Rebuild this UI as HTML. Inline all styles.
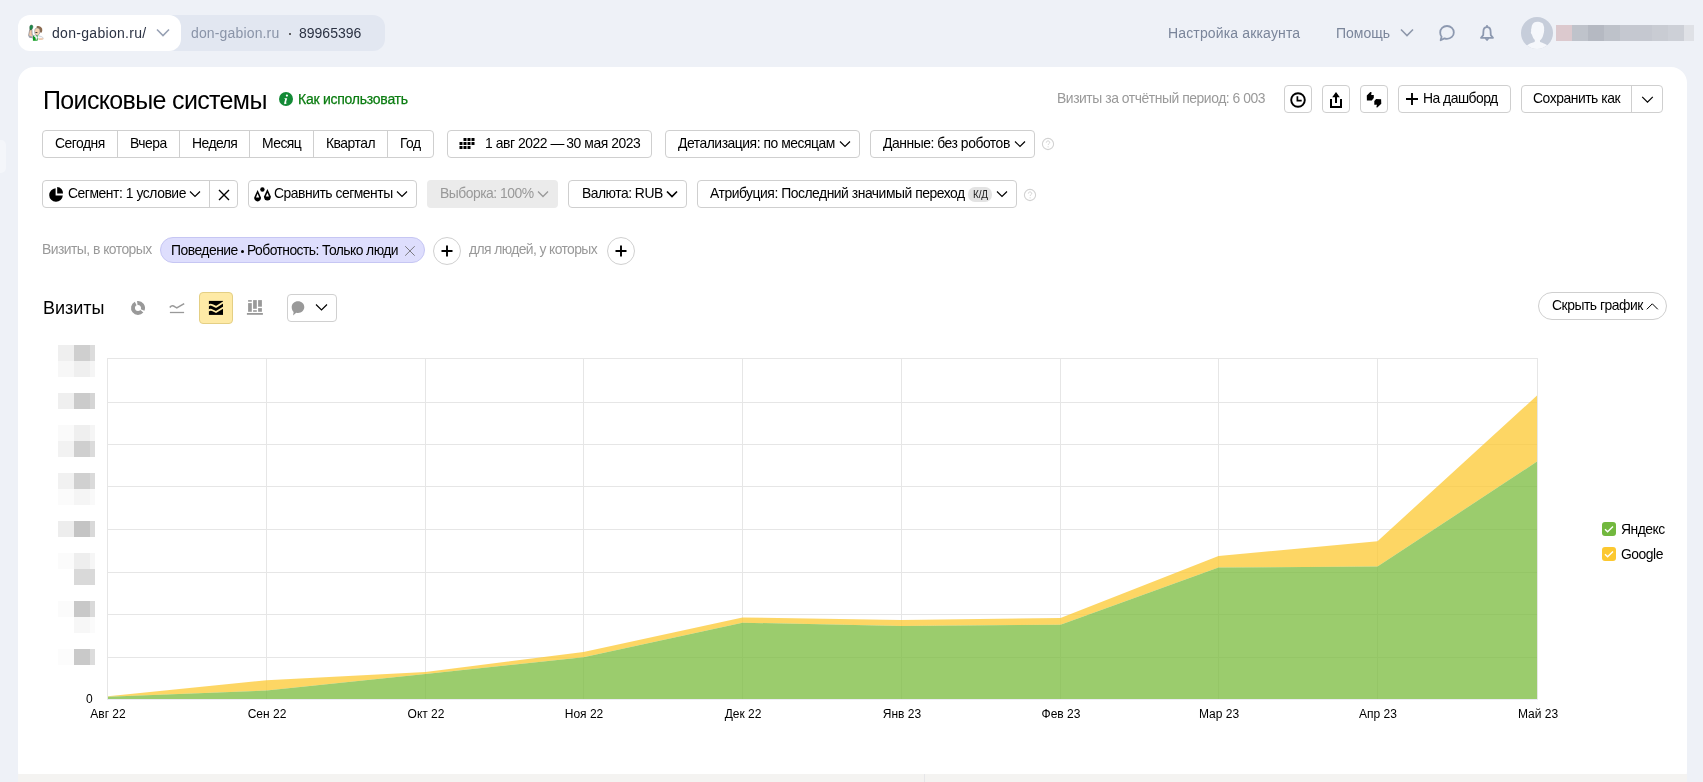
<!DOCTYPE html>
<html><head><meta charset="utf-8">
<style>
*{box-sizing:border-box;margin:0;padding:0}
html,body{width:1703px;height:782px;overflow:hidden;background:#eef1f7;font-family:"Liberation Sans",sans-serif;color:#000}
.a{position:absolute}
.t{position:absolute;white-space:nowrap;line-height:1;will-change:transform}
.btn{position:absolute;border:1px solid #cfcfcf;border-radius:4px;background:#fff;height:28px}
.chev{position:absolute}
</style></head><body>
<!-- TOP BAR -->
<div class="a" style="left:160px;top:15px;width:225px;height:36px;border-radius:12px;background:#e2e7f1"></div>
<div class="a" style="left:18px;top:15px;width:163px;height:36px;border-radius:12px;background:#fff"></div>
<svg class="a" style="left:26px;top:23px" width="20" height="20" viewBox="0 0 20 20">
<path d="M2.6 12.2l1.1-5.4 2.2-.5.3 5.6 2 .8-1 2.2-3.4-.6z" fill="#f2c9a8" stroke="#6b6f7a" stroke-width=".6"/>
<path d="M2.4 12.3l3.6 1.2 1.5-.2-.3 1.7-4.2-.5z" fill="#9aa0ad"/>
<path d="M4.2 2.6c.8-.9 2.3-.6 2.6.4.3 1.2-.2 2.7-1.2 3.6l-1.6.3C3.6 5.5 3.6 3.4 4.2 2.6z" fill="#1a8a4a" stroke="#2f5a3c" stroke-width=".5"/>
<path d="M10.6 3.4c2.2-.8 4.6.2 5.4 2.2.6 1.6.2 3.2-.5 4.2l-2.4-.8-2.5-2.9z" fill="#8b6a4f"/>
<path d="M9.4 5.6c1.4-1 3.4-.6 4.2.8.7 1.4.4 3.3-.3 4.6-.6 1.1-1.6 1.6-2.6 1.4-1.2-.3-1.8-1.4-2-2.5-.2-1.4 0-3.4.7-4.3z" fill="#f4d2b2" stroke="#7a7f8c" stroke-width=".5"/>
<path d="M9.4 9.2c.8-.3 1.6-.3 2.4.1-.6.7-1.5.9-2.3.6z" fill="#333"/>
<path d="M6.5 12.6l3 .2 2.4-.3 3.8 1.2 1.6 1.2-1 1.4-3.8-.3H7z" fill="#f6f7fa" stroke="#a0a6b2" stroke-width=".5"/>
<path d="M7 12.4l2.4 2 .6 3.4H6.9zM9.6 12.4l2.2.2-.5 2.8-1.4 2.4h1.6l.4-3.6z" fill="#0c9a1c"/>
<path d="M12 15.6l4-.4 1.6.3-.5 1-3.6.5z" fill="#f0c7a6"/>
</svg>
<div class="t" style="left:52px;top:26px;font-size:14px;color:#2b3243;letter-spacing:.3px">don-gabion.ru/</div>
<svg class="a" style="left:156px;top:28px" width="14" height="10" viewBox="0 0 14 10"><path d="M1 1.5l6 6 6-6" fill="none" stroke="#97a1b4" stroke-width="1.6"/></svg>
<div class="t" style="left:190.5px;top:26px;font-size:14px;color:#8a94a8;letter-spacing:.15px">don-gabion.ru</div>
<div class="a" style="left:288.8px;top:32.7px;width:2.6px;height:2.6px;border-radius:2px;background:#333"></div>
<div class="t" style="left:299px;top:26px;font-size:14px;color:#2b3243">89965396</div>

<div class="t" style="left:1168px;top:26px;font-size:14px;color:#7a859a;letter-spacing:.15px">Настройка аккаунта</div>
<div class="t" style="left:1336px;top:26px;font-size:14px;color:#7a859a">Помощь</div>
<svg class="a" style="left:1400px;top:28px" width="14" height="10" viewBox="0 0 14 10"><path d="M1 1.5l6 6 6-6" fill="none" stroke="#8e98ab" stroke-width="1.6"/></svg>
<svg class="a" style="left:1438px;top:24px" width="18" height="18" viewBox="0 0 18 18"><path d="M9 2c3.9 0 6.8 2.8 6.8 6.4S12.9 14.8 9 14.8c-.9 0-1.8-.15-2.6-.45L2.6 16.2l1-3.4C2.7 11.6 2.2 10.1 2.2 8.4 2.2 4.8 5.1 2 9 2z" fill="none" stroke="#8d99b0" stroke-width="1.8" stroke-linejoin="round"/></svg>
<svg class="a" style="left:1478px;top:24px" width="18" height="18" viewBox="0 0 18 18"><path d="M9 3.2c-2.2 0-3.6 1.7-3.6 4.4l-.2 3.6-2.2 2.6h12l-2.2-2.6-.2-3.6C12.6 4.9 11.2 3.2 9 3.2z" fill="none" stroke="#8d99b0" stroke-width="1.8" stroke-linejoin="round"/><path d="M7.2 14l1.8 2 1.8-2" fill="none" stroke="#8d99b0" stroke-width="1.7" stroke-linejoin="round"/><rect x="8.1" y="1.1" width="1.8" height="2.4" rx=".6" fill="#8d99b0"/></svg>
<div class="a" style="left:1521px;top:17px;width:32px;height:32px;border-radius:16px;background:#c6cdda;overflow:hidden"><svg width="32" height="32" viewBox="0 0 32 32"><path d="M11 8.2c1-2.6 3.4-3.6 6.2-3.4 2.2.2 3.6.9 4.8 2 .5 1 .4 2 1 3 .4 1.3-.2 2.4.2 3.4-.1 1.6-.4 3.2-.9 4.6-.7 2.7-1.8 4.6-3.4 5.6l.2 1.6c3 .8 6 2.3 8.4 4.2L26 32H6l-1-3.1c2.6-1.8 5.2-3 8.6-3.9l.3-2c-1.4-1.2-2.4-3-2.9-5.2-.6-.4-1-1.3-1.2-2.2.4-1 .5-1.6.2-2.8.6-1.4.4-2.8 1-4.6z" fill="#f5f7fb"/></svg></div>
<div class="a" style="left:1556px;top:25px;height:16px;width:138px;display:flex">
<div style="width:16px;background:#dcc9ce"></div><div style="width:16px;background:#bfc3cb"></div><div style="width:16px;background:#b5b9c2"></div><div style="width:16px;background:#bec2ca"></div><div style="width:16px;background:#c5c8d0"></div><div style="width:16px;background:#c5c8d0"></div><div style="width:16px;background:#c9ccd3"></div><div style="width:16px;background:#cdd0d7"></div><div style="width:10px;background:#dfe1e6"></div>
</div>

<div class="a" style="left:-10px;top:140px;width:16px;height:33px;border-radius:5px;background:#f4f6fa"></div>
<!-- CARD -->
<div class="a" style="left:18px;top:67px;width:1669px;height:720px;border-radius:16px;background:#fff"></div>
<div class="a" style="left:18px;top:774px;width:1669px;height:8px;background:#f4f3f1"></div>
<div class="a" style="left:924px;top:774px;width:1px;height:8px;background:#e6e6e9"></div>

<!-- HEADER ROW -->
<div class="t" style="left:43px;top:87.5px;font-size:25px;color:#000;letter-spacing:-.65px">Поисковые системы</div>
<div class="a" style="left:279px;top:92px;width:14px;height:14px;border-radius:7px;background:#138a36"></div>
<svg class="a" style="left:279px;top:92px" width="14" height="14" viewBox="0 0 14 14"><circle cx="7.9" cy="3.6" r="1.1" fill="#fff"/><path d="M5.6 6.2h2.6l-1.2 4.4c-.1.4.2.5.6.2l.4-.3.2.3c-.8.9-1.6 1.4-2.3 1.4-.6 0-.9-.4-.7-1.1l.9-3.6c.1-.4-.3-.5-.7-.3z" fill="#fff"/></svg>
<div class="t" style="left:298px;top:91.5px;font-size:14px;color:#0a7c10;letter-spacing:-.25px;-webkit-text-stroke:.25px #0a7c10">Как использовать</div>

<div class="t" style="left:1057px;top:92.23px;font-size:13.9px;letter-spacing:-0.446px;color:#999">Визиты за отчётный период: 6 003</div>
<div class="btn" style="left:1284px;top:85px;width:28px"></div>
<svg class="a" style="left:1284px;top:85px" width="28" height="28" viewBox="0 0 28 28"><circle cx="14" cy="15" r="6.8" fill="none" stroke="#000" stroke-width="1.9"/><path d="M13.4 11.2v4.5h4.3" fill="none" stroke="#000" stroke-width="1.7"/></svg>
<div class="btn" style="left:1322px;top:85px;width:28px"></div>
<svg class="a" style="left:1322px;top:85px" width="28" height="28" viewBox="0 0 28 28"><path d="M14 7l3.8 5.2h-2.8V18h-2V12.2h-2.8z" fill="#000"/><path d="M9 14v8h10v-8" fill="none" stroke="#000" stroke-width="2"/></svg>
<div class="btn" style="left:1360px;top:85px;width:28px"></div>
<svg class="a" style="left:1360px;top:85px" width="28" height="28" viewBox="0 0 28 28"><path d="M6.8 10.4L10.3 7l1.3.3-.4 2.7h2.6v2.9l-2 2.5H6.9z" fill="#000"/><path d="M14.3 15.9l1.8-1.9 5 .2.2 4.5-4 3.9-1-.3.7-2.6h-2.7z" fill="#000"/></svg>
<div class="btn" style="left:1398px;top:85px;width:113px"></div>
<svg class="a" style="left:1405px;top:92px" width="14" height="14" viewBox="0 0 14 14"><path d="M7 1v12M1 7h12" stroke="#000" stroke-width="1.9"/></svg>
<div class="t" style="left:1423px;top:92.23px;font-size:13.9px;letter-spacing:-0.512px">На дашборд</div>
<div class="btn" style="left:1521px;top:85px;width:142px"></div>
<div class="a" style="left:1631px;top:86px;width:1px;height:26px;background:#cfcfcf"></div>
<div class="t" style="left:1533px;top:92.23px;font-size:13.9px;letter-spacing:-0.459px">Сохранить как</div>
<svg class="a" style="left:1641px;top:95px" width="13" height="9" viewBox="0 0 13 9"><path d="M1.2 1.8l5.3 5.3 5.3-5.3" fill="none" stroke="#000" stroke-width="1.2"/></svg>

<!-- ROW 1 -->
<div class="btn" style="left:42px;top:130px;width:392px"></div>
<div class="a" style="left:117px;top:131px;width:1px;height:26px;background:#cfcfcf"></div>
<div class="a" style="left:179px;top:131px;width:1px;height:26px;background:#cfcfcf"></div>
<div class="a" style="left:249px;top:131px;width:1px;height:26px;background:#cfcfcf"></div>
<div class="a" style="left:313px;top:131px;width:1px;height:26px;background:#cfcfcf"></div>
<div class="a" style="left:387px;top:131px;width:1px;height:26px;background:#cfcfcf"></div>
<div class="t" style="left:55px;top:137.23px;font-size:13.9px;letter-spacing:-0.489px">Сегодня</div>
<div class="t" style="left:130px;top:137.23px;font-size:13.9px;letter-spacing:-0.503px">Вчера</div>
<div class="t" style="left:191.5px;top:137.23px;font-size:13.9px;letter-spacing:-0.518px">Неделя</div>
<div class="t" style="left:262px;top:137.23px;font-size:13.9px;letter-spacing:-0.537px">Месяц</div>
<div class="t" style="left:326px;top:137.23px;font-size:13.9px;letter-spacing:-0.480px">Квартал</div>
<div class="t" style="left:400px;top:137.23px;font-size:13.9px;letter-spacing:-0.474px">Год</div>

<div class="btn" style="left:447px;top:130px;width:205px"></div>
<svg class="a" style="left:459px;top:137px" width="17" height="13" viewBox="0 0 17 13"><g fill="#000"><rect x="4.5" y="1" width="3" height="3"/><rect x="8.5" y="1" width="3" height="3"/><rect x="12.5" y="1" width="3" height="3"/><rect x=".5" y="5" width="3" height="3"/><rect x="4.5" y="5" width="3" height="3"/><rect x="8.5" y="5" width="3" height="3"/><rect x="12.5" y="5" width="3" height="3"/><rect x=".5" y="9" width="3" height="3"/><rect x="4.5" y="9" width="3" height="3"/><rect x="8.5" y="9" width="3" height="3"/></g></svg>
<div class="t" style="left:484.5px;top:137.23px;font-size:13.9px;letter-spacing:-0.446px">1 авг 2022 —<span style="margin-left:-1px"> </span>30 мая 2023</div>

<div class="btn" style="left:665px;top:130px;width:195px"></div>
<div class="t" style="left:678px;top:137.23px;font-size:13.9px;letter-spacing:-0.467px">Детализация: по месяцам</div>
<svg class="a" style="left:839px;top:140px" width="12" height="8" viewBox="0 0 12 8"><path d="M1 1.5l5 5 5-5" fill="none" stroke="#000" stroke-width="1.15"/></svg>

<div class="btn" style="left:870px;top:130px;width:165px"></div>
<div class="t" style="left:882.5px;top:137.23px;font-size:13.9px;letter-spacing:-0.457px">Данные: без роботов</div>
<svg class="a" style="left:1013.5px;top:140px" width="12" height="8" viewBox="0 0 12 8"><path d="M1 1.5l5 5 5-5" fill="none" stroke="#000" stroke-width="1.15"/></svg>
<svg class="a" style="left:1041px;top:137px" width="14" height="14" viewBox="0 0 14 14"><circle cx="7" cy="7" r="5.6" fill="none" stroke="#d2d2d2" stroke-width="1.1"/><path d="M5.3 5.6c0-1 .8-1.7 1.7-1.7s1.7.7 1.7 1.6c0 1.2-1.5 1.2-1.5 2.4" fill="none" stroke="#d2d2d2" stroke-width="1"/><circle cx="7.1" cy="9.8" r=".6" fill="#d2d2d2"/></svg>

<!-- ROW 2 -->
<div class="btn" style="left:42px;top:180px;width:196px"></div>
<div class="a" style="left:209px;top:181px;width:1px;height:26px;background:#cfcfcf"></div>
<svg class="a" style="left:48px;top:186px" width="16" height="16" viewBox="0 0 16 16"><path d="M7.6 2.2A6.8 6.8 0 1 0 14.8 9.4H7.6z" fill="#000"/><path d="M9.2 1A6.2 6.2 0 0 1 15 7.6H9.2z" fill="#000"/></svg>
<div class="t" style="left:67.5px;top:187.23px;font-size:13.9px;letter-spacing:-0.449px">Сегмент: 1 условие</div>
<svg class="a" style="left:188.5px;top:190px" width="12" height="8" viewBox="0 0 12 8"><path d="M1 1.5l5 5 5-5" fill="none" stroke="#000" stroke-width="1.15"/></svg>
<svg class="a" style="left:218px;top:189px" width="12" height="12" viewBox="0 0 12 12"><path d="M1 1l10 10M11 1L1 11" stroke="#000" stroke-width="1.4"/></svg>

<div class="btn" style="left:248px;top:180px;width:169px"></div>
<svg class="a" style="left:253px;top:186px" width="19" height="17" viewBox="0 0 19 17"><path d="M4.6 3.9L1.3 11.2A3.4 3.4 0 1 0 7.9 11.2z" fill="#000"/><path d="M4.6 7.6L3 11.4h3.2z" fill="#fff"/><path d="M14.4 3L11.1 10.3A3.4 3.4 0 1 0 17.7 10.3z" fill="#000"/><path d="M14.4 6.7l-1.6 3.8H16z" fill="#fff"/><circle cx="9.4" cy="3.5" r="2.2" fill="#000"/></svg>
<div class="t" style="left:274px;top:187.23px;font-size:13.9px;letter-spacing:-0.478px">Сравнить сегменты</div>
<svg class="a" style="left:395.5px;top:190px" width="12" height="8" viewBox="0 0 12 8"><path d="M1 1.5l5 5 5-5" fill="none" stroke="#000" stroke-width="1.15"/></svg>

<div class="a" style="left:427px;top:180px;width:131px;height:28px;border-radius:4px;background:#ebebeb"></div>
<div class="t" style="left:439.5px;top:187.23px;font-size:13.9px;letter-spacing:-0.493px;color:#999">Выборка: 100%</div>
<svg class="a" style="left:536.5px;top:190px" width="12" height="8" viewBox="0 0 12 8"><path d="M1 1.5l5 5 5-5" fill="none" stroke="#999" stroke-width="1.3"/></svg>

<div class="btn" style="left:568px;top:180px;width:119px"></div>
<div class="t" style="left:581.5px;top:187.23px;font-size:13.9px;letter-spacing:-0.501px">Валюта: RUB</div>
<svg class="a" style="left:665.5px;top:190px" width="12" height="8" viewBox="0 0 12 8"><path d="M1 1.5l5 5 5-5" fill="none" stroke="#000" stroke-width="1.7"/></svg>

<div class="btn" style="left:697px;top:180px;width:320px"></div>
<div class="t" style="left:710px;top:187.23px;font-size:13.9px;letter-spacing:-0.471px">Атрибуция: Последний значимый переход</div>
<div class="a" style="left:967.5px;top:187px;width:24.5px;height:14.5px;border-radius:7px;background:#e3e3e3"></div>
<div class="t" style="left:973px;top:189.5px;font-size:10px;color:#222;letter-spacing:-.2px">К/Д</div>
<svg class="a" style="left:996px;top:190px" width="12" height="8" viewBox="0 0 12 8"><path d="M1 1.5l5 5 5-5" fill="none" stroke="#000" stroke-width="1.15"/></svg>
<svg class="a" style="left:1023px;top:188px" width="14" height="14" viewBox="0 0 14 14"><circle cx="7" cy="7" r="5.6" fill="none" stroke="#d2d2d2" stroke-width="1.1"/><path d="M5.3 5.6c0-1 .8-1.7 1.7-1.7s1.7.7 1.7 1.6c0 1.2-1.5 1.2-1.5 2.4" fill="none" stroke="#d2d2d2" stroke-width="1"/><circle cx="7.1" cy="9.8" r=".6" fill="#d2d2d2"/></svg>

<!-- ROW 3 -->
<div class="t" style="left:41.7px;top:243.23px;font-size:13.9px;letter-spacing:-0.53px;color:#999;">Визиты, в которых</div>
<div class="a" style="left:160px;top:237px;width:265px;height:26px;border-radius:13px;background:#dedefd;border:1px solid #c6c6f3"></div>
<div class="t" style="left:170.5px;top:243.83px;font-size:13.9px;letter-spacing:-0.509px">Поведение</div><div class="a" style="left:240.7px;top:249.7px;width:3.2px;height:3.2px;border-radius:2px;background:#000"></div><div class="t" style="left:246.8px;top:243.83px;font-size:13.9px;letter-spacing:-0.56px;">Роботность: Только люди</div>
<svg class="a" style="left:404px;top:245px" width="12" height="12" viewBox="0 0 12 12"><path d="M1.2 1.2l9.5 9.5M10.7 1.2L1.2 10.7" stroke="#7a7a80" stroke-width="1"/></svg>
<div class="a" style="left:433px;top:237px;width:28px;height:28px;border-radius:14px;border:1px solid #d0d0d0"></div>
<svg class="a" style="left:441px;top:245px" width="12" height="12" viewBox="0 0 12 12"><path d="M6 .5v11M.5 6h11" stroke="#000" stroke-width="1.9"/></svg>
<div class="t" style="left:468.5px;top:243.23px;font-size:13.9px;letter-spacing:-0.609px;color:#999;">для людей, у которых</div>
<div class="a" style="left:607px;top:237px;width:28px;height:28px;border-radius:14px;border:1px solid #d0d0d0"></div>
<svg class="a" style="left:615px;top:245px" width="12" height="12" viewBox="0 0 12 12"><path d="M6 .5v11M.5 6h11" stroke="#000" stroke-width="1.9"/></svg>

<!-- CHART HEADER -->
<div class="t" style="left:43px;top:299px;font-size:18px">Визиты</div>
<svg class="a" style="left:127px;top:297px" width="22" height="22" viewBox="0 0 22 22"><path d="M10.30 6.00A5.05 5.05 0 0 1 15.61 13.05" fill="none" stroke="#999" stroke-width="3.9"/><path d="M14.87 14.25A5.05 5.05 0 1 1 8.71 6.50" fill="none" stroke="#999" stroke-width="3.9"/></svg>
<svg class="a" style="left:166px;top:297px" width="22" height="22" viewBox="0 0 22 22"><path d="M3.8 10.4Q6 7.6 8.6 9.6L10.8 10.9 18.2 6.6" fill="none" stroke="#999" stroke-width="1.6" stroke-linejoin="round"/><path d="M3.9 15.5h14.2" stroke="#999" stroke-width="1.3"/></svg>
<div class="a" style="left:199px;top:292px;width:34px;height:32px;border-radius:4px;background:#feeaa6;border:1px solid #e4cf84"></div>
<svg class="a" style="left:204px;top:297px" width="24" height="22" viewBox="0 0 24 22"><rect x="4.9" y="3.9" width="14.1" height="14" fill="#000"/><path d="M4.2 8.7Q6.3 6.9 8.4 8.1L12 9.9 19.8 5.1M4.2 13.8Q6.3 12 8.4 13.2L12 15 19.8 10.2" fill="none" stroke="#feeaa6" stroke-width="1.8" stroke-linejoin="round"/></svg>
<svg class="a" style="left:244px;top:297px" width="22" height="20" viewBox="0 0 22 20"><g fill="#999"><rect x="4.1" y="3.1" width="3.7" height="1.6"/><rect x="4.1" y="6.1" width="3.7" height="8.7"/><rect x="9.1" y="3.1" width="3.7" height="8.7"/><rect x="9.1" y="13.2" width="3.7" height="1.6"/><rect x="14.1" y="3.1" width="3.8" height="6.6"/><rect x="14.1" y="11.1" width="3.8" height="3.7"/><rect x="2.9" y="16" width="16" height="1.8"/></g></svg>
<div class="a" style="left:287px;top:294px;width:50px;height:28px;border-radius:4px;border:1px solid #d0d0d0"></div>
<svg class="a" style="left:290px;top:300px" width="16" height="17" viewBox="0 0 16 17"><path d="M8 1.2c3.6 0 6.3 2.6 6.3 5.9S11.6 13 8 13c-.6 0-1.2-.1-1.8-.2L3.1 15.4 3.6 12C2.3 10.9 1.7 9.1 1.7 7.1 1.7 3.8 4.4 1.2 8 1.2z" fill="#999"/></svg>
<svg class="a" style="left:315px;top:303px" width="13" height="9" viewBox="0 0 13 9"><path d="M1 1.5l5.5 5.5 5.5-5.5" fill="none" stroke="#000" stroke-width="1.15"/></svg>

<div class="a" style="left:1538px;top:292px;width:129px;height:28px;border-radius:14px;border:1px solid #cfcfcf"></div>
<div class="t" style="left:1551.5px;top:299.23px;font-size:13.9px;letter-spacing:-0.478px">Скрыть график</div>
<svg class="a" style="left:1645.5px;top:302px" width="13" height="9" viewBox="0 0 13 9"><path d="M.8 7.3l5.5-5.5 5.5 5.5" fill="none" stroke="#000" stroke-width="1"/></svg>

<!-- LEGEND -->
<div class="a" style="left:1602px;top:522px;width:14px;height:14px;border-radius:3px;background:#72b83e"></div>
<svg class="a" style="left:1602px;top:522px" width="14" height="14" viewBox="0 0 14 14"><path d="M3 7.2l2.6 2.6L11 4.4" fill="none" stroke="#fff" stroke-width="1.4"/></svg>
<div class="t" style="left:1621px;top:523.23px;font-size:13.9px;letter-spacing:-0.500px">Яндекс</div>
<div class="a" style="left:1602px;top:547px;width:14px;height:14px;border-radius:3px;background:#fcc830"></div>
<svg class="a" style="left:1602px;top:547px" width="14" height="14" viewBox="0 0 14 14"><path d="M3 7.2l2.6 2.6L11 4.4" fill="none" stroke="#fff" stroke-width="1.4"/></svg>
<div class="t" style="left:1621px;top:548.23px;font-size:13.9px;letter-spacing:-0.479px">Google</div>

<svg class="a" style="left:0;top:0" width="1703" height="782" viewBox="0 0 1703 782"><rect x="107" y="358" width="1" height="341" fill="#e6e6e6"/><rect x="266" y="358" width="1" height="341" fill="#e6e6e6"/><rect x="425" y="358" width="1" height="341" fill="#e6e6e6"/><rect x="583" y="358" width="1" height="341" fill="#e6e6e6"/><rect x="742" y="358" width="1" height="341" fill="#e6e6e6"/><rect x="901" y="358" width="1" height="341" fill="#e6e6e6"/><rect x="1060" y="358" width="1" height="341" fill="#e6e6e6"/><rect x="1218" y="358" width="1" height="341" fill="#e6e6e6"/><rect x="1377" y="358" width="1" height="341" fill="#e6e6e6"/><rect x="1537" y="358" width="1" height="341" fill="#e6e6e6"/><rect x="107" y="358" width="1431" height="1" fill="#e6e6e6"/><rect x="107" y="402" width="1431" height="1" fill="#e6e6e6"/><rect x="107" y="444" width="1431" height="1" fill="#e6e6e6"/><rect x="107" y="486" width="1431" height="1" fill="#e6e6e6"/><rect x="107" y="529" width="1431" height="1" fill="#e6e6e6"/><rect x="107" y="572" width="1431" height="1" fill="#e6e6e6"/><rect x="107" y="614" width="1431" height="1" fill="#e6e6e6"/><rect x="107" y="657" width="1431" height="1" fill="#e6e6e6"/><rect x="107" y="699" width="1431" height="1" fill="#ebebf2"/><path d="M108,696.3 L266.5,680.2 L425.5,671.9 L583.5,652 L742.5,617.5 L901.5,620.1 L1060.5,617.9 L1218.5,556 L1377.5,541.2 L1537,395.5 L1537,461.6 L1377.5,566.5 L1218.5,567.6 L1060.5,624.8 L901.5,625.9 L742.5,622.7 L583.5,657.2 L425.5,674 L266.5,690.5 L108,696.7 Z" fill="#fcc830" fill-opacity=".75"/><path d="M108,696.7 L266.5,690.5 L425.5,674 L583.5,657.2 L742.5,622.7 L901.5,625.9 L1060.5,624.8 L1218.5,567.6 L1377.5,566.5 L1537,461.6 L1537,699 L108,699 Z" fill="#7abb3c" fill-opacity=".75"/></svg>
<div class="t" style="left:47.5px;width:120px;text-align:center;top:708px;font-size:12px;color:#000">Авг 22</div>
<div class="t" style="left:206.5px;width:120px;text-align:center;top:708px;font-size:12px;color:#000">Сен 22</div>
<div class="t" style="left:365.5px;width:120px;text-align:center;top:708px;font-size:12px;color:#000">Окт 22</div>
<div class="t" style="left:523.5px;width:120px;text-align:center;top:708px;font-size:12px;color:#000">Ноя 22</div>
<div class="t" style="left:682.5px;width:120px;text-align:center;top:708px;font-size:12px;color:#000">Дек 22</div>
<div class="t" style="left:841.5px;width:120px;text-align:center;top:708px;font-size:12px;color:#000">Янв 23</div>
<div class="t" style="left:1000.5px;width:120px;text-align:center;top:708px;font-size:12px;color:#000">Фев 23</div>
<div class="t" style="left:1158.5px;width:120px;text-align:center;top:708px;font-size:12px;color:#000">Мар 23</div>
<div class="t" style="left:1317.5px;width:120px;text-align:center;top:708px;font-size:12px;color:#000">Апр 23</div>
<div class="t" style="left:1477.5px;width:120px;text-align:center;top:708px;font-size:12px;color:#000">Май 23</div>
<div class="t" style="left:86px;top:693px;font-size:12px;color:#000">0</div>
<div class="a" style="left:58px;top:345px;width:16px;height:16px;background:#efefef"></div>
<div class="a" style="left:74px;top:345px;width:16px;height:16px;background:#cfcfcf"></div>
<div class="a" style="left:90px;top:345px;width:5px;height:16px;background:#dcdcdc"></div>
<div class="a" style="left:58px;top:361px;width:16px;height:16px;background:#f7f7f7"></div>
<div class="a" style="left:74px;top:361px;width:16px;height:16px;background:#efefef"></div>
<div class="a" style="left:90px;top:361px;width:5px;height:16px;background:#f5f5f5"></div>
<div class="a" style="left:58px;top:393px;width:16px;height:16px;background:#efefef"></div>
<div class="a" style="left:74px;top:393px;width:16px;height:16px;background:#cbcbcb"></div>
<div class="a" style="left:90px;top:393px;width:5px;height:16px;background:#d5d5d5"></div>
<div class="a" style="left:58px;top:425px;width:16px;height:16px;background:#fafafa"></div>
<div class="a" style="left:74px;top:425px;width:16px;height:16px;background:#efefef"></div>
<div class="a" style="left:90px;top:425px;width:5px;height:16px;background:#f5f5f5"></div>
<div class="a" style="left:58px;top:441px;width:16px;height:16px;background:#f2f2f2"></div>
<div class="a" style="left:74px;top:441px;width:16px;height:16px;background:#cfcfcf"></div>
<div class="a" style="left:90px;top:441px;width:5px;height:16px;background:#dbdbdb"></div>
<div class="a" style="left:58px;top:473px;width:16px;height:16px;background:#f1f1f1"></div>
<div class="a" style="left:74px;top:473px;width:16px;height:16px;background:#d0d0d0"></div>
<div class="a" style="left:90px;top:473px;width:5px;height:16px;background:#dadada"></div>
<div class="a" style="left:58px;top:489px;width:16px;height:16px;background:#fbfbfb"></div>
<div class="a" style="left:74px;top:489px;width:16px;height:16px;background:#f5f5f5"></div>
<div class="a" style="left:90px;top:489px;width:5px;height:16px;background:#f9f9f9"></div>
<div class="a" style="left:58px;top:521px;width:16px;height:16px;background:#ededed"></div>
<div class="a" style="left:74px;top:521px;width:16px;height:16px;background:#c4c4c4"></div>
<div class="a" style="left:90px;top:521px;width:5px;height:16px;background:#d9d9d9"></div>
<div class="a" style="left:58px;top:553px;width:16px;height:16px;background:#fbfbfb"></div>
<div class="a" style="left:74px;top:553px;width:16px;height:16px;background:#eeeeee"></div>
<div class="a" style="left:90px;top:553px;width:5px;height:16px;background:#f6f6f6"></div>
<div class="a" style="left:74px;top:569px;width:16px;height:16px;background:#d9d9d9"></div>
<div class="a" style="left:90px;top:569px;width:5px;height:16px;background:#d9d9d9"></div>
<div class="a" style="left:58px;top:601px;width:16px;height:16px;background:#fbfbfb"></div>
<div class="a" style="left:74px;top:601px;width:16px;height:16px;background:#c8c8c8"></div>
<div class="a" style="left:90px;top:601px;width:5px;height:16px;background:#dadada"></div>
<div class="a" style="left:74px;top:617px;width:16px;height:16px;background:#f7f7f7"></div>
<div class="a" style="left:90px;top:617px;width:5px;height:16px;background:#fbfbfb"></div>
<div class="a" style="left:58px;top:649px;width:16px;height:16px;background:#fcfcfc"></div>
<div class="a" style="left:74px;top:649px;width:16px;height:16px;background:#c9c9c9"></div>
<div class="a" style="left:90px;top:649px;width:5px;height:16px;background:#dcdcdc"></div>
</body></html>
